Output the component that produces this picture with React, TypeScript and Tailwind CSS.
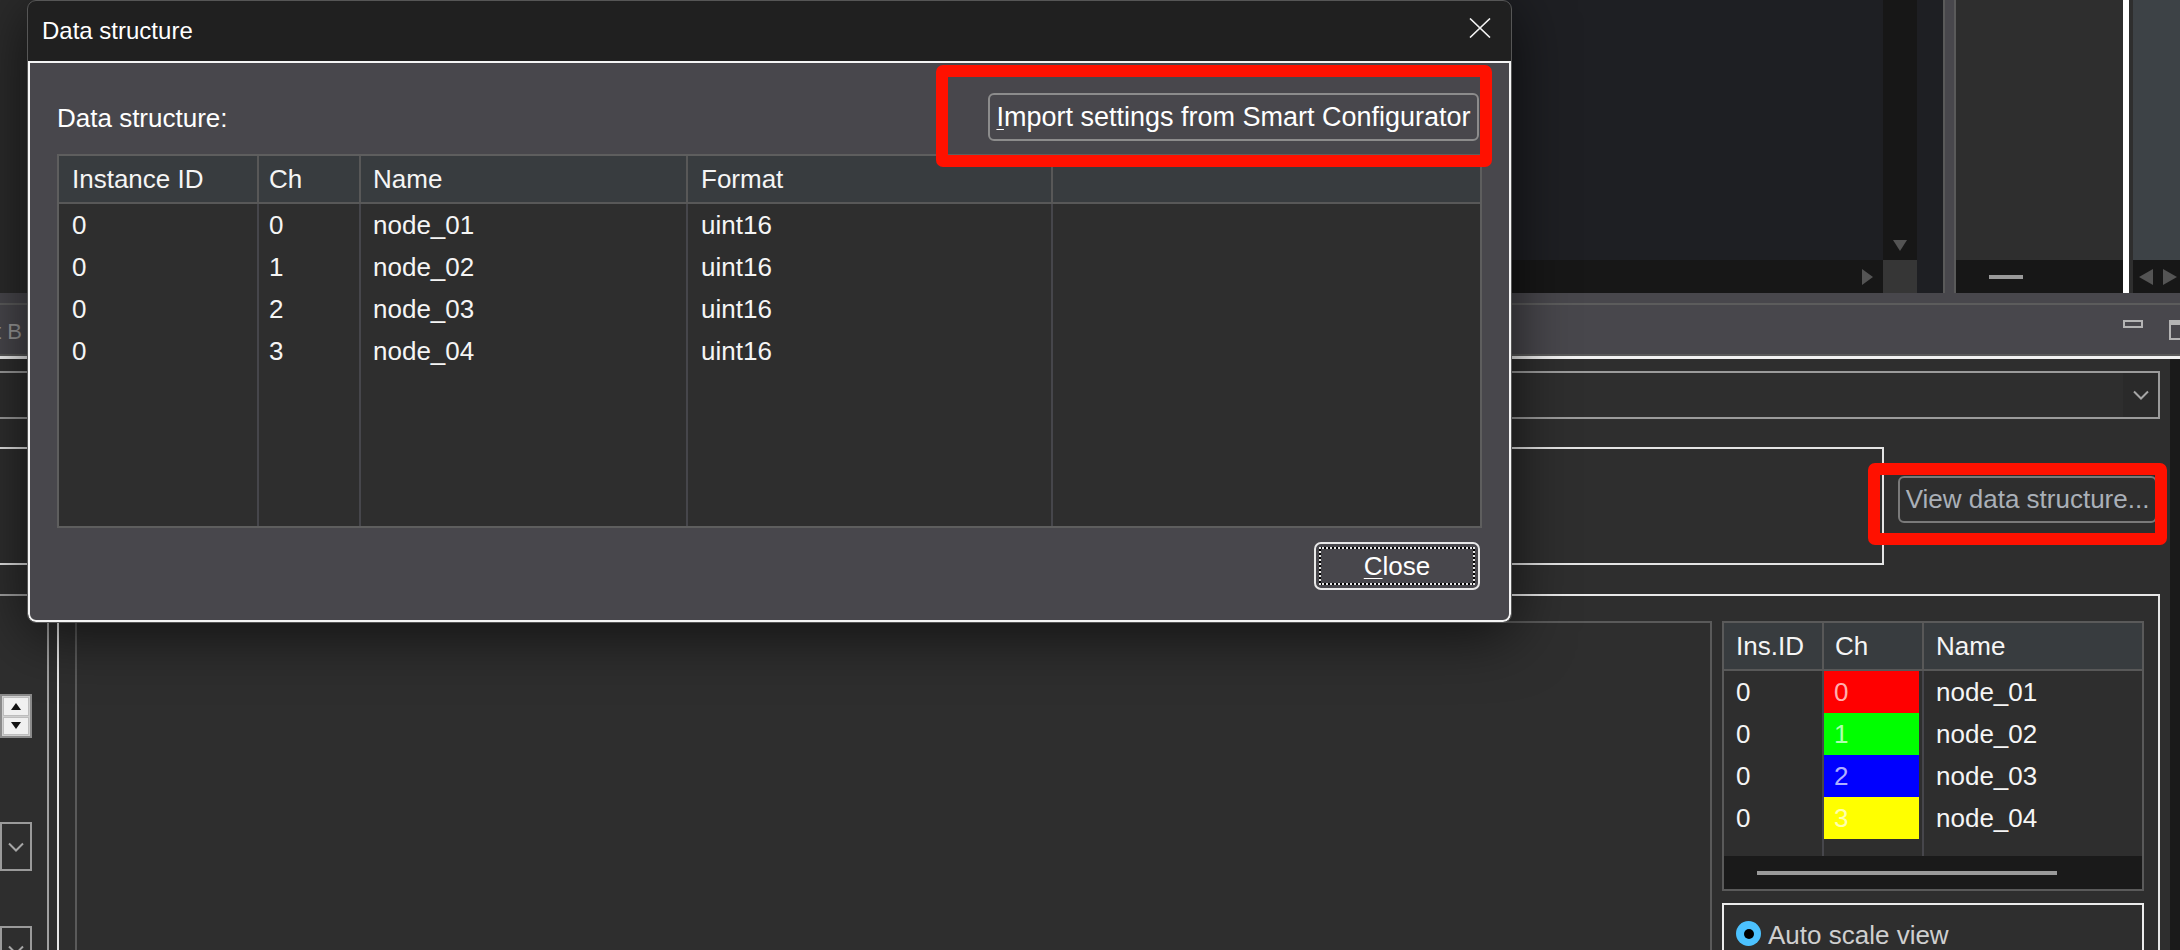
import React from 'react'

const rows = [
  { id: '0', ch: '0', name: 'node_01', format: 'uint16' },
  { id: '0', ch: '1', name: 'node_02', format: 'uint16' },
  { id: '0', ch: '2', name: 'node_03', format: 'uint16' },
  { id: '0', ch: '3', name: 'node_04', format: 'uint16' },
]

const channels = [
  { ch: '0', name: 'node_01', color: 'bg-[#ff0000]' },
  { ch: '1', name: 'node_02', color: 'bg-[#00ff00]' },
  { ch: '2', name: 'node_03', color: 'bg-[#0000ff]' },
  { ch: '3', name: 'node_04', color: 'bg-[#ffff00]' },
]

function Chevron() {
  return (
    <svg width="16" height="10" viewBox="0 0 16 10" aria-hidden="true">
      <path d="M1 1.5 L8 8.5 L15 1.5" fill="none" stroke="#a6a6a6" strokeWidth="2" />
    </svg>
  )
}

function DataStructureDialog() {
  return (
    <div className="absolute left-[27px] top-0 flex h-[623px] w-[1485px] flex-col overflow-hidden rounded-[9px] border border-[#565656] bg-[#202020] shadow-[0_10px_60px_rgba(0,0,0,0.65)]">
      {/* title bar */}
      <div className="flex h-[60px] shrink-0 items-center justify-between pl-[14px] pr-[20px]">
        <span className="text-[24px] text-white">Data structure</span>
        <svg width="22" height="20" viewBox="0 0 22 20" className="-mt-[6px]" aria-hidden="true">
          <path d="M1 0.5 L21 19.5 M21 0.5 L1 19.5" stroke="#f2f2f2" strokeWidth="1.6" />
        </svg>
      </div>

      <div className="flex flex-1 flex-col rounded-b-[8px] border-2 border-[#f4f4f4] bg-[#48474c] px-[27px] pt-[30px]">
        <div className="flex h-[48px] items-center justify-between">
          <span className="mt-[2px] text-white">Data structure:</span>
          <button className="mr-[3px] h-[48px] w-[491px] rounded-[6px] border-2 border-[#8c8c8c] text-[27px] text-white">
            <span className="underline decoration-1 underline-offset-[3px]">I</span>mport settings from Smart Configurator
          </button>
        </div>

        {/* table */}
        <div className="mt-[13px] flex h-[374px] flex-col border-2 border-[#5e5e5e] bg-[#2e2e2e] text-[#f5f5f5]">
          <div className="flex h-[48px] shrink-0 border-b-2 border-[#585858] bg-[#383c3f]">
            <div className="flex w-[198px] items-center pl-[13px]">Instance ID</div>
            <div className="flex w-[102px] items-center border-l-2 border-[#585858] pl-[10px]">Ch</div>
            <div className="flex w-[327px] items-center border-l-2 border-[#585858] pl-[12px]">Name</div>
            <div className="flex w-[365px] items-center border-l-2 border-[#585858] pl-[13px]">Format</div>
            <div className="flex-1 border-l-2 border-[#585858]" />
          </div>
          <div className="flex flex-1">
            <div className="flex w-[198px] flex-col pl-[13px]">
              {rows.map((r, i) => (
                <div key={i} className="flex h-[42px] items-center">{r.id}</div>
              ))}
            </div>
            <div className="flex w-[102px] flex-col border-l-2 border-[#46464b] pl-[10px]">
              {rows.map((r, i) => (
                <div key={i} className="flex h-[42px] items-center">{r.ch}</div>
              ))}
            </div>
            <div className="flex w-[327px] flex-col border-l-2 border-[#46464b] pl-[12px]">
              {rows.map((r, i) => (
                <div key={i} className="flex h-[42px] items-center">{r.name}</div>
              ))}
            </div>
            <div className="flex w-[365px] flex-col border-l-2 border-[#46464b] pl-[13px]">
              {rows.map((r, i) => (
                <div key={i} className="flex h-[42px] items-center">{r.format}</div>
              ))}
            </div>
            <div className="flex-1 border-l-2 border-[#46464b]" />
          </div>
        </div>

        <button className="mr-[2px] mt-[14px] h-[48px] w-[166px] self-end rounded-[7px] border-2 border-[#e8e8e8] p-[3px] text-white">
          <span className="flex h-full w-full items-center justify-center border-2 border-black outline-2 -outline-offset-2 outline-dotted outline-[#e6e6e6]">
            <span>
              <span className="underline decoration-1 underline-offset-[3px]">C</span>lose
            </span>
          </span>
        </button>
      </div>
    </div>
  )
}

export default function App() {
  return (
    <div className="relative h-[950px] w-[2180px] overflow-hidden bg-[#48474c] font-['Liberation_Sans',Arial,sans-serif] text-[26px] leading-normal text-[#f0f0f0]">
      {/* top panels */}
      <div className="flex h-[293px]">
        <div className="w-[400px] shrink-0 bg-[#2b2b2b]" />
        <div className="flex w-[1545px] shrink-0 flex-col border-r-2 border-[#5a5a5a] bg-[#1e1f23]">
          <div className="flex flex-1">
            <div className="flex-1" />
            <div className="flex w-[34px] flex-col items-center justify-end bg-[#171717] pb-[9px]">
              <svg width="14" height="11" viewBox="0 0 14 11" aria-hidden="true">
                <path d="M0 0 H14 L7 11 Z" fill="#545454" />
              </svg>
            </div>
            <div className="w-[26px]" />
          </div>
          <div className="flex h-[33px]">
            <div className="flex flex-1 items-center justify-end bg-[#171717] pr-[10px]">
              <svg width="11" height="16" viewBox="0 0 11 16" aria-hidden="true">
                <path d="M0 0 L11 8 L0 16 Z" fill="#545454" />
              </svg>
            </div>
            <div className="w-[34px] bg-[#363636]" />
            <div className="w-[26px]" />
          </div>
        </div>
        <div className="ml-[9px] flex w-[169px] shrink-0 flex-col border-l-2 border-[#5a5a5a] bg-[#2e2e2e]">
          <div className="flex-1" />
          <div className="flex h-[33px] items-center bg-[#171717] pl-[33px]">
            <div className="h-[4px] w-[34px] bg-[#9a9a9a]" />
          </div>
        </div>
        <div className="w-[6px] shrink-0 bg-white" />
        <div className="w-[4px] shrink-0 bg-[#2e2e2e]" />
        <div className="flex flex-1 flex-col bg-[#3d4246]">
          <div className="flex-1" />
          <div className="flex h-[33px] items-center gap-[10px] bg-[#171717] pl-[6px]">
            <svg width="14" height="16" viewBox="0 0 14 16" aria-hidden="true">
              <path d="M14 0 L0 8 L14 16 Z" fill="#545454" />
            </svg>
            <svg width="14" height="16" viewBox="0 0 14 16" aria-hidden="true">
              <path d="M0 0 L14 8 L0 16 Z" fill="#545454" />
            </svg>
          </div>
        </div>
      </div>

      {/* toolbar strip */}
      <div className="h-[10px]" />
      <div className="h-[2px] bg-[#5c5c5c]" />
      <div className="flex h-[49px] items-start justify-between">
        <span className="-ml-[5px] mt-[14px] text-[22px] leading-[26px] text-[#9a9a9a]">t B</span>
        <div className="-mr-[9px] mt-[15px] flex items-start gap-[26px]">
          <div className="h-[8px] w-[20px] border-2 border-[#b4b4b4]" />
          <div className="h-[20px] w-[20px] border-2 border-t-[5px] border-[#b4b4b4]" />
        </div>
      </div>
      <div className="h-[2px] bg-[#5a5a5a]" />
      <div className="h-[3px] bg-[#f2f2f2]" />

      {/* main area */}
      <div className="flex h-[591px] overflow-hidden">
        <div className="flex flex-1 flex-col bg-[#2e2e2e] pt-[12px]">
          <div className="-ml-[4px] mr-[10px] flex h-[48px] shrink-0 justify-end border-2 border-[#9b9b9b]">
            <div className="flex w-[35px] items-center justify-center bg-[#2a2a2a]">
              <Chevron />
            </div>
          </div>

          <div className="mt-[28px] flex h-[118px] shrink-0 items-start">
            <div className="-ml-[4px] h-full w-[1888px] border-2 border-[#e4e4e4]" />
            <button className="ml-[14px] mt-[29px] h-[47px] w-[259px] rounded-[6px] border-2 border-[#7a7a7a] text-[#aab0b8]">
              View data structure...
            </button>
          </div>

          <div className="mt-[29px] flex h-[420px] shrink-0 items-start">
            {/* left controls column */}
            <div className="-ml-[4px] flex h-full w-[53px] shrink-0 flex-col border-r-2 border-t-2 border-[#a0a0a0] pl-[4px]">
              <div className="mt-[98px] flex h-[44px] w-[32px] flex-col gap-[1px] border-2 border-[#8a8a8a] bg-[#cfcfcf] p-[1px]">
                <div className="flex flex-1 items-center justify-center border border-[#bdbdbd] bg-[#f0f0f0]">
                  <svg width="10" height="7" viewBox="0 0 10 7" aria-hidden="true">
                    <path d="M5 0 L10 7 H0 Z" fill="#111" />
                  </svg>
                </div>
                <div className="flex flex-1 items-center justify-center border border-[#bdbdbd] bg-[#f0f0f0]">
                  <svg width="10" height="7" viewBox="0 0 10 7" aria-hidden="true">
                    <path d="M0 0 H10 L5 7 Z" fill="#111" />
                  </svg>
                </div>
              </div>
              <div className="mt-[84px] flex h-[49px] w-[32px] items-center justify-center border-2 border-[#9a9a9a]">
                <Chevron />
              </div>
              <div className="mt-[55px] flex h-[60px] w-[32px] justify-center border-2 border-[#9a9a9a] pt-[17px]">
                <Chevron />
              </div>
            </div>

            {/* group box */}
            <div className="ml-[8px] mr-[10px] flex h-full flex-1 gap-[10px] border-2 border-[#e8e8e8] pl-[16px] pr-[14px] pt-[25px]">
              <div className="h-full w-[1637px] shrink-0 border-2 border-[#5a5a5a] bg-[#2e2e2e]" />
              <div className="flex w-[422px] shrink-0 flex-col">
                <div className="flex h-[270px] flex-col border-2 border-[#5a5a5a] bg-[#2e2e2e] text-[#f5f5f5]">
                  <div className="flex h-[48px] shrink-0 border-b-2 border-[#585858] bg-[#383c3f]">
                    <div className="flex w-[98px] items-center pl-[12px]">Ins.ID</div>
                    <div className="flex w-[100px] items-center border-l-2 border-[#585858] pl-[11px]">Ch</div>
                    <div className="flex flex-1 items-center border-l-2 border-[#585858] pl-[12px]">Name</div>
                  </div>
                  <div className="flex flex-1">
                    <div className="flex w-[98px] flex-col pl-[12px]">
                      {channels.map((c, i) => (
                        <div key={i} className="flex h-[42px] items-center">0</div>
                      ))}
                    </div>
                    <div className="flex w-[100px] flex-col border-l-2 border-[#46464b] pr-[3px]">
                      {channels.map((c, i) => (
                        <div key={i} className={`flex h-[42px] items-center pl-[10px] text-white/70 ${c.color}`}>
                          {c.ch}
                        </div>
                      ))}
                    </div>
                    <div className="flex flex-1 flex-col border-l-2 border-[#46464b] pl-[12px]">
                      {channels.map((c, i) => (
                        <div key={i} className="flex h-[42px] items-center">{c.name}</div>
                      ))}
                    </div>
                  </div>
                  <div className="flex h-[33px] shrink-0 items-center bg-[#1a1a1a] pl-[33px]">
                    <div className="h-[4px] w-[300px] bg-[#9a9a9a]" />
                  </div>
                </div>
                <div className="mt-[12px] flex h-[100px] items-start border-2 border-[#ececec] pl-[12px] pt-[16px]">
                  <div className="flex h-[25px] w-[25px] items-center justify-center rounded-full bg-[#4cc2ff]">
                    <div className="h-[10px] w-[10px] rounded-full bg-black" />
                  </div>
                  <span className="ml-[7px] -mt-[5px] text-[#cfcfcf]">Auto scale view</span>
                </div>
              </div>
            </div>
          </div>
        </div>
        <div className="w-[10px] shrink-0 bg-[#1a1a1a]" />
      </div>

      <DataStructureDialog />

      {/* red highlight boxes */}
      <div className="absolute left-[936px] top-[65px] h-[102px] w-[556px] rounded-[7px] border-[12px] border-[#ff1100]" />
      <div className="absolute left-[1868px] top-[463px] h-[82px] w-[299px] rounded-[7px] border-[12px] border-[#ff1100]" />
    </div>
  )
}
